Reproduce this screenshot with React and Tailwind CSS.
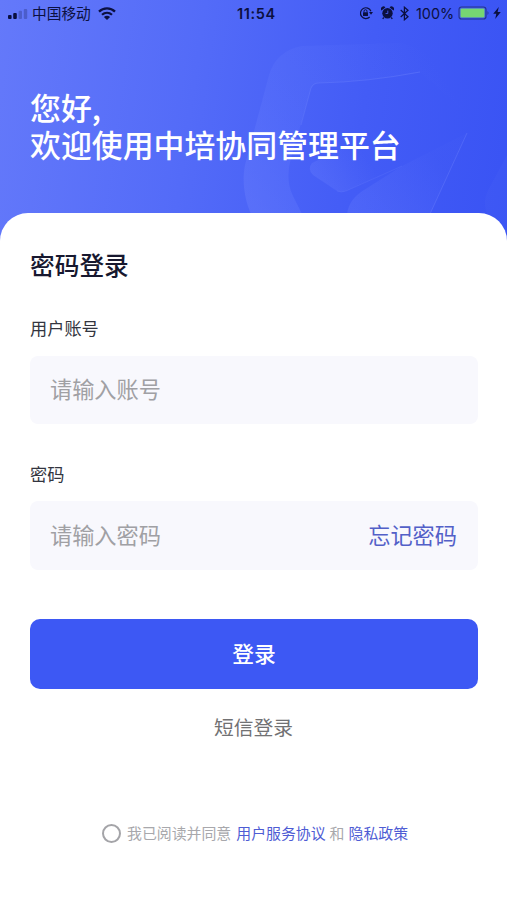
function Emblem() {
  return (
    <svg className="absolute inset-0" width="507" height="245" viewBox="0 0 507 245" fill="none">
      <defs>
        <linearGradient id="ring" x1="245" y1="190" x2="440" y2="70" gradientUnits="userSpaceOnUse">
          <stop stopColor="#7488ff" stopOpacity=".3" />
          <stop offset=".35" stopColor="#6880ff" stopOpacity=".2" />
          <stop offset="1" stopColor="#6880ff" stopOpacity="0" />
        </linearGradient>
        <linearGradient id="gem" x1="315" y1="185" x2="385" y2="140" gradientUnits="userSpaceOnUse">
          <stop stopColor="#7488ff" stopOpacity=".26" />
          <stop offset=".7" stopColor="#7488ff" stopOpacity="0" />
        </linearGradient>
        <linearGradient id="tail" x1="355" y1="212" x2="430" y2="150" gradientUnits="userSpaceOnUse">
          <stop stopColor="#7488ff" stopOpacity=".22" />
          <stop offset="1" stopColor="#7488ff" stopOpacity=".03" />
        </linearGradient>
        <linearGradient id="edge" x1="313" y1="83" x2="420" y2="72" gradientUnits="userSpaceOnUse">
          <stop stopColor="#7d91ff" stopOpacity=".22" />
          <stop offset="1" stopColor="#7d91ff" stopOpacity=".3" />
        </linearGradient>
      </defs>
      <path
        fill="url(#ring)"
        d="M251 214C244 198 242 180 245 165L269 75Q276 51 302 46L400 43Q424 47 450 72L507 118V150L420 72Q365 82 318 83Q313 84 311 89L291 158Q285 180 293 196L302 214Z"
      />
      <path stroke="url(#edge)" strokeWidth="1" d="M301 125L311 88Q313 83 319 83Q367 82 420 72" />
      <path fill="url(#gem)" d="M312 163Q307 169 313 175L337 191Q341 193 346 191L402 166L370 135Z" />
      <path stroke="#7d91ff" strokeOpacity=".15" d="M337 191Q341 193 346 191L402 166" />
      <path fill="url(#tail)" d="M347 214Q349 199 364 190L402 166L467 133L430 214Z" />
      <path stroke="#7d91ff" strokeOpacity=".28" d="M467 133L430 214" />
      <path fill="#6d83ff" fillOpacity=".07" d="M507 155L488 190Q482 202 487 214L507 235Z" />
    </svg>
  );
}

function StatusBar() {
  return (
    <div className="relative flex h-[27px] items-center text-[#0b1040]">
      <svg className="ml-2 shrink-0" width="20" height="12" viewBox="0 0 20 12" fill="#0b1040">
        <rect x="0" y="7" width="3.6" height="4" rx="1" />
        <rect x="5.2" y="5" width="3.6" height="6" rx="1" />
        <rect x="10.6" y="2.8" width="3.4" height="8.2" rx="1" opacity=".25" />
        <rect x="15.8" y="1" width="3.4" height="10" rx="1" opacity=".25" />
      </svg>
      <span className="-mt-px ml-1 w-[60px] whitespace-nowrap text-[14.7px] leading-[26px]">中国移动</span>
      <svg className="-mt-px ml-[6px] shrink-0" width="18" height="13" viewBox="0 0 18 13" fill="none" stroke="#0b1040">
        <path strokeWidth="2.3" d="M1 4.6C5.4 .3 12.6 .3 17 4.6" />
        <path strokeWidth="2.2" d="M4 7.8C6.9 5.1 11.1 5.1 14 7.8" />
        <path fill="#0b1040" stroke="none" d="M5.9 9.9Q9 7.4 12.1 9.9L9 12.9Z" />
      </svg>
      <span className="ml-[121px] w-[122px] font-['Inter','Liberation_Sans',sans-serif] text-[14.5px] font-semibold leading-[26px] tracking-[0.6px]">
        11:54
      </span>
      <svg className="-mt-px shrink-0" width="14" height="14" viewBox="0 0 14 14" fill="none" stroke="#0b1040">
        <path strokeWidth="1.2" d="M10.7 11A5.4 5.4 0 1 1 11.9 5.2" />
        <path fill="#0b1040" stroke="none" d="M10 6H14L12 8.8Z" />
        <rect x="4" y="6.2" width="5" height="3.8" rx=".5" fill="#0b1040" stroke="none" />
        <path d="M5 6.5V5.2A1.5 1.5 0 0 1 8 5.2V6.5" />
      </svg>
      <svg className="-mt-px ml-[8px] shrink-0" width="13" height="14" viewBox="0 0 13 14" fill="#0b1040">
        <circle cx="6.5" cy="7.3" r="5.2" />
        <path d="M.5 4.5A2.4 2.4 0 0 1 4.4 1.4ZM12.5 4.5A2.4 2.4 0 0 0 8.6 1.4ZM2.3 11.1L3.3 12L2.2 13.2L1.2 12.5ZM10.7 11.1L9.7 12L10.8 13.2L11.8 12.5Z" />
        <path d="M6.8 4.6V7.5H4.6" fill="none" stroke="#465cf2" strokeWidth=".9" />
      </svg>
      <svg className="-mt-px ml-[6px] shrink-0" width="9" height="15" viewBox="0 0 9 15" fill="none" stroke="#0b1040" strokeWidth="1.25">
        <path d="M.7 4L8 10.7L4.4 13.8V1.2L8 4.3L.7 11" />
      </svg>
      <span className="ml-[7px] w-[42px] font-['Inter','Liberation_Sans',sans-serif] text-[14.4px] leading-[26px]">
        100%
      </span>
      <svg className="-mt-px shrink-0" width="32" height="14" viewBox="0 0 32 14" fill="none">
        <rect x="1" y="1" width="27" height="12" rx="2.6" stroke="#26358a" strokeWidth="1.1" />
        <rect x="2.5" y="2.5" width="24" height="9" rx="1" fill="#76d672" />
        <path fill="#26358a" d="M29.5 5Q31.5 7 29.5 9Z" />
      </svg>
      <svg className="-mt-px ml-[3px] shrink-0" width="8" height="12" viewBox="0 0 8 12" fill="#0b1040">
        <path d="M5.8 0L.2 6.7H3.3L2.2 12L7.8 5H4.6Z" />
      </svg>
    </div>
  );
}

export default function App() {
  return (
    <div className="h-[900px] w-[507px] overflow-hidden bg-white font-['Noto_Sans_CJK_SC',sans-serif]">
      <header className="relative h-[245px] bg-[linear-gradient(98deg,#6479fa_0%,#536bf8_38%,#435cf6_70%,#3953f4_100%)]">
        <Emblem />
        <StatusBar />
        <h1 className="relative whitespace-nowrap pl-[30px] pt-[61px] text-[30.9px] font-medium leading-[37px] text-white">
          <span className="block">您好,</span>
          <span className="block">欢迎使用中培协同管理平台</span>
        </h1>
      </header>
      <main className="relative -mt-8 h-[687px] rounded-t-[28px] bg-white px-[30px] pt-[33px]">
        <h2 className="text-[24.7px] font-medium leading-9 text-[#17182f]">密码登录</h2>
        <label className="mt-[34px] block text-[17.2px] leading-6 text-[#333540]">用户账号</label>
        <div className="mt-4 flex h-[68px] w-[448px] items-center rounded-lg bg-[#f8f8fd] px-5 pb-[4px] text-[22.2px] leading-8 text-[#a0a0a4]">
          请输入账号
        </div>
        <label className="mt-[38px] block text-[17.2px] leading-6 text-[#333540]">密码</label>
        <div className="mt-[15px] flex h-[69px] w-[448px] items-center justify-between rounded-lg bg-[#f8f8fd] pb-[4px] pl-5 pr-[21px] text-[22.2px] leading-8 text-[#a0a0a4]">
          <span>请输入密码</span>
          <span className="text-[#5360c8]">忘记密码</span>
        </div>
        <button className="mt-[49px] flex h-[70px] w-[448px] items-center justify-center rounded-[10px] bg-[#3d58f4] pb-[2px] text-[21.8px] font-medium text-white">
          登录
        </button>
        <div className="mt-[22px] text-center text-[19.8px] leading-8 text-[#717173]">短信登录</div>
        <div className="ml-[72px] mt-[78px] flex items-center whitespace-nowrap text-[14.9px] leading-6 text-[#a8a8ac]">
          <span className="mr-[6px] size-[19px] rounded-full border-2 border-[#a4a4a8]" />
          <span>我已阅读并同意</span>
          <span className="ml-[5px] text-[#4e5cd4]">用户服务协议</span>
          <span className="ml-1">和</span>
          <span className="ml-1 text-[#4e5cd4]">隐私政策</span>
        </div>
      </main>
    </div>
  );
}
